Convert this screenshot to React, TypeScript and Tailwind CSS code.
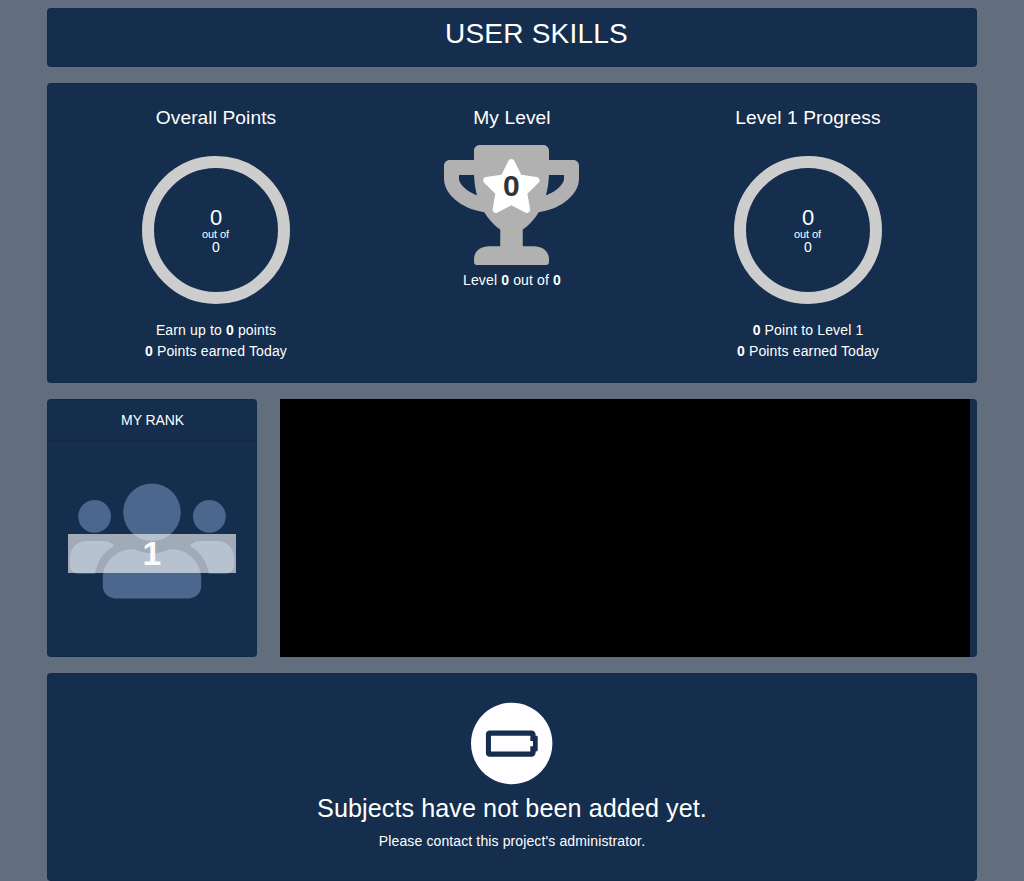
import type { ReactNode } from "react";
import { FaBatteryEmpty, FaCircle, FaStar, FaTrophy, FaUsers } from "react-icons/fa";

function Card({ className = "", children }: { className?: string; children?: ReactNode }) {
  return (
    <section className={`rounded border border-[#12284a]/50 bg-[#152e4d] ${className}`}>{children}</section>
  );
}

function Ring({ value, total }: { value: number; total: number }) {
  return (
    <div className="mt-[26px] flex h-[148px] w-[148px] flex-col items-center justify-center rounded-full border-12 border-[#cdcdcd] tracking-normal">
      <span className="pt-px text-[22px] leading-[22px]">{value}</span>
      <span className="mr-px text-[11px] leading-[11px] tracking-[-0.05px]">out of</span>
      <span className="text-[14px] leading-[15px]">{total}</span>
    </div>
  );
}

function Column({ title, children }: { title: string; children: ReactNode }) {
  return (
    <div className="flex flex-col items-center">
      <h2 className="text-[19.2px] leading-6 tracking-[0.08px]">{title}</h2>
      {children}
    </div>
  );
}

export default function App() {
  return (
    <main className="flex h-[881px] flex-col gap-4 overflow-hidden bg-[#626d7d] pt-2 pr-[47px] pl-[47px] font-['Liberation_Sans',Arial,sans-serif] text-[14px] tracking-[0.14px] text-white">
      <Card className="h-[59px] shrink-0 pt-[7px] pl-[49px] text-center">
        <h1 className="text-[28px] leading-[35px] tracking-[0.22px]">USER SKILLS</h1>
      </Card>

      <Card className="grid h-[300px] shrink-0 grid-cols-[296px_296px_296px] justify-center pt-[22px]">
        <Column title="Overall Points">
          <Ring value={0} total={0} />
          <div className="mt-4 text-center leading-[21px]">
            <p>Earn up to <b>0</b> points</p>
            <p><b>0</b> Points earned Today</p>
          </div>
        </Column>
        <Column title="My Level">
          <div className="relative mt-[15px] mr-px h-[120px] w-[135px]">
            <FaTrophy className="h-[120px] w-[135px] text-[#b1b1b1]" />
            <FaStar className="absolute top-[13.5px] left-[37px] h-[54px] w-[60.75px]" />
            <b className="absolute top-[24px] left-0 w-full text-center text-[30px] leading-[34px] text-[#333]">0</b>
          </div>
          <p className="mt-[5px] leading-[21px]">Level <b>0</b> out of <b>0</b></p>
        </Column>
        <Column title="Level 1 Progress">
          <Ring value={0} total={0} />
          <div className="mt-4 text-center leading-[21px]">
            <p><b>0</b> Point to Level 1</p>
            <p><b>0</b> Points earned Today</p>
          </div>
        </Column>
      </Card>

      <div className="flex h-[258px] shrink-0 gap-[23px]">
        <Card className="flex w-[210px] flex-col">
          <h2 className="h-[41px] border-b border-[#122845] pl-px text-center leading-[41px] tracking-[-0.1px]">MY RANK</h2>
          <div className="relative mx-5 mt-[34px] flex h-[132px] justify-center">
            <FaUsers className="h-[132px] w-[164px] text-[#4b678d]" />
            <b className="absolute top-[59px] left-0 h-[39px] w-full bg-white/60 text-center text-[33.6px] leading-[39px] text-[#fefafa]">1</b>
          </div>
        </Card>
        <div className="flex-1 rounded-r bg-[#152e4d] pr-[7px]">
          <div className="h-full bg-black" />
        </div>
      </div>

      <Card className="flex h-[208px] shrink-0 flex-col items-center pt-[27px]">
        <div className="relative h-[84px] w-[84px] -translate-x-[0.3px] translate-y-[0.5px]">
          <FaCircle className="h-[84px] w-[84px] text-[#fefdff]" />
          <FaBatteryEmpty className="absolute top-[21px] left-[15.75px] h-[42px] w-[52.5px] text-[#152e4d]" />
        </div>
        <h2 className="mt-[8px] text-[25.2px] leading-[30px] tracking-[0.06px]">Subjects have not been added yet.</h2>
        <p className="mt-[8px] leading-[21px] tracking-[0.12px]">Please contact this project's administrator.</p>
      </Card>
    </main>
  );
}
